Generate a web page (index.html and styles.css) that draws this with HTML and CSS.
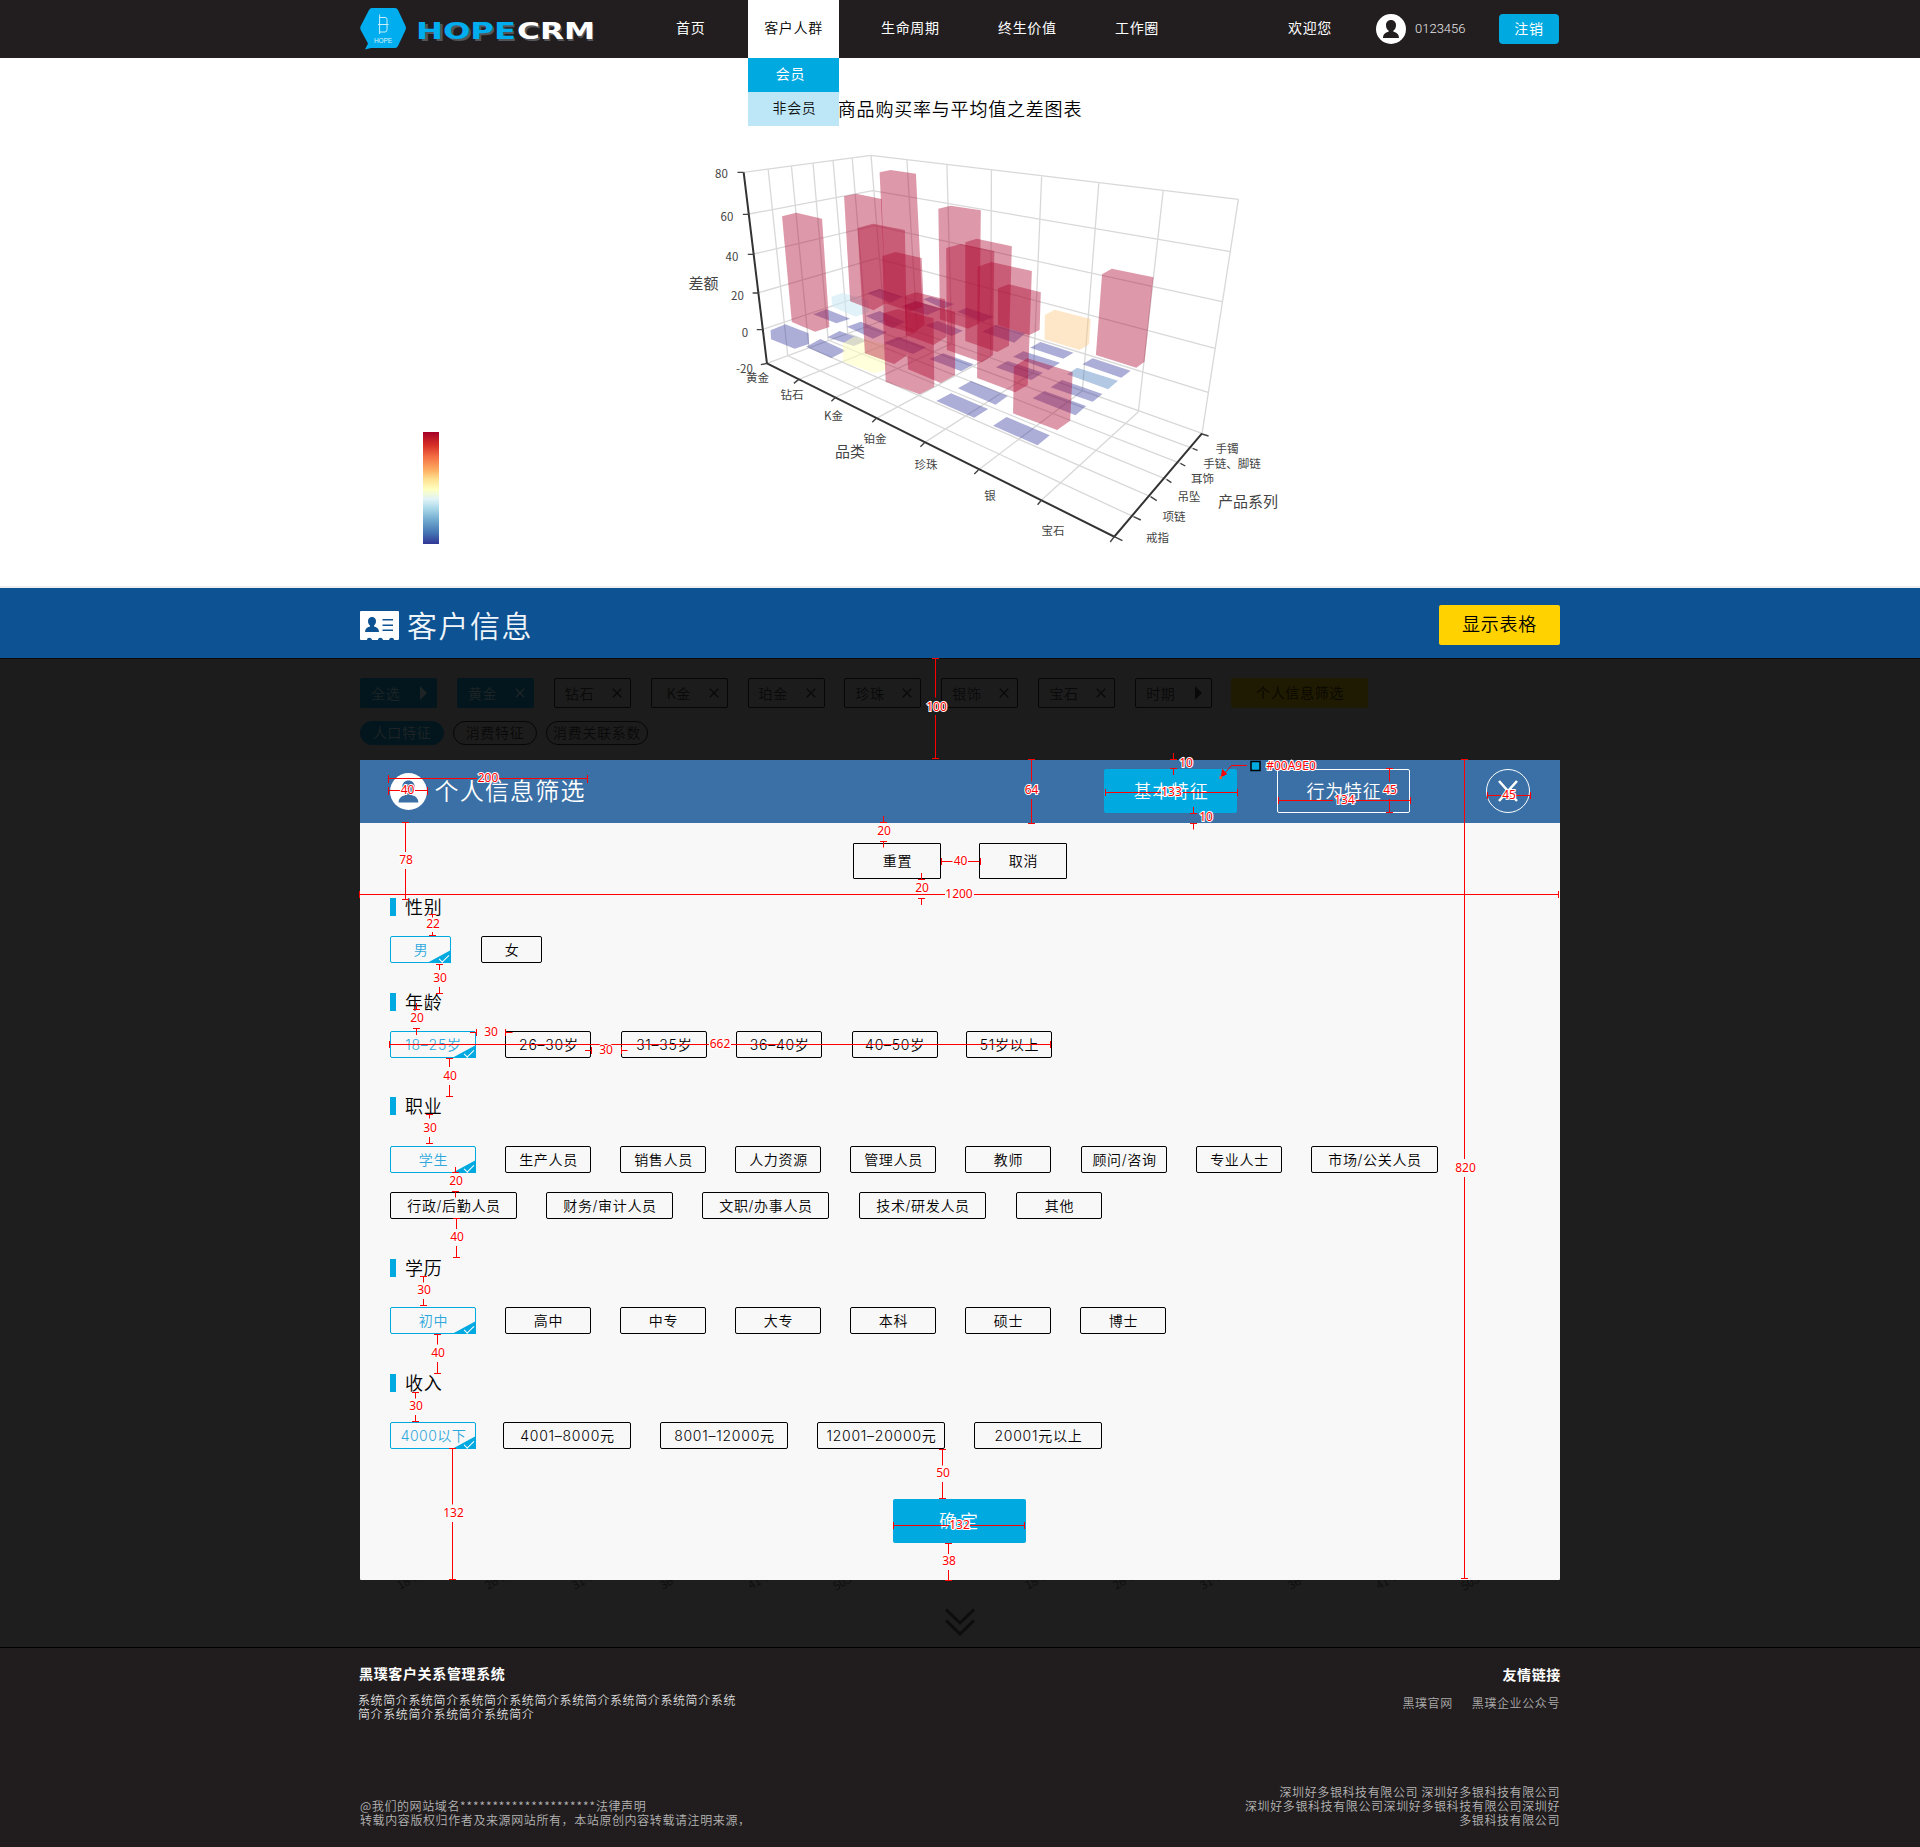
FILE: index.html
```html
<!DOCTYPE html>
<html lang="zh-CN">
<head>
<meta charset="utf-8">
<title>HOPECRM</title>
<link rel="stylesheet" href="styles.css">
</head>
<body>
<svg class="defs" width="0" height="0">
  <symbol id="user" viewBox="0 0 30 30"><circle cx="15" cy="15" r="15" fill="#fff"/><path class="cut" d="M15 6c-3 0-5 2.200-5 5.200 0 2.400 1 4.400 2.600 5.400v1.200C9.500 18.600 7 20.200 7 24h16c0-3.800-2.500-5.400-5.600-6.200v-1.200C19 15.600 20 13.600 20 11.200 20 8.200 18 6 15 6z"/></symbol>
  <symbol id="x" viewBox="0 0 10 10"><path d="M.8.8l8.400 8.400M9.200.8L.8 9.200" fill="none" stroke="currentColor" stroke-width="1.300"/></symbol>
  <symbol id="play" viewBox="0 0 8 14"><path d="M0 0l7 7-7 7z" fill="currentColor"/></symbol>
</svg>
<header class="top">
  <div class="wrap top-row">
    <svg class="logo" width="240" height="58" viewBox="0 0 240 58">
      <path d="M12 8h23q2 0 3 2l7.500 16q.8 2 0 4L38 46q-1 2-3 2H11l-6 1.500 3-6L.700 30q-.8-2 0-4L9 10q1-2 3-2z" fill="#00aeef"/>
      <path d="M19.600 14.500v19.500M20 17.500h5q2 0 2 2v10q0 2.500-2 2.500h-5M18 24.500h10.500" fill="none" stroke="#c9eefc" stroke-width="1"/>
      <text class="logo-tag" x="14" y="43" textLength="18">HOPE</text>
      <g class="logo-word logo-shadow" aria-hidden="true"><text x="59" y="41" textLength="98" lengthAdjust="spacingAndGlyphs">HOPE</text><text x="159" y="41" textLength="77" lengthAdjust="spacingAndGlyphs">CRM</text></g>
      <g class="logo-word"><text x="56" y="39" textLength="100" lengthAdjust="spacingAndGlyphs" fill="#00aeef">HOPE</text><text x="157" y="39" textLength="78" lengthAdjust="spacingAndGlyphs" fill="#fff">CRM</text></g>
    </svg>
    <nav class="nav">
      <a class="n-home">首页</a>
      <div class="tab">客户人群
        <div class="menu"><a class="on">会员</a><a>非会员</a></div>
      </div>
      <a class="n-life">生命周期</a>
      <a class="n-value">终生价值</a>
      <a class="n-work">工作圈</a>
    </nav>
    <div class="account">
      <span>欢迎您</span>
      <svg class="avatar" width="30" height="30"><use href="#user"/></svg>
      <span class="uid">0123456</span>
      <a class="logout">注销</a>
    </div>
  </div>
</header>

<section class="chart">
  <h1>商品购买率与平均值之差图表</h1>
  <div class="wrap chart-row">
    <div class="legend"></div>
    <svg class="plot" width="640" height="420" viewBox="0 0 640 420">
      <g transform="scale(.408163 .333333)">
        <g class="grid">
          <path d="M205 97L517 46L1417 178M218 222L521 152L1398 335M230 342L525 257L1377 485M242 458L530 355L1360 625M252 568L538 450L1343 757M262 670L550 540L1328 880"/>
          <path d="M265 88L313 647M322 78L365 623M375 70L412 600M424 62L460 580M471 55L505 560M517 46L550 540M605 60L630 575M703 75L715 610M812 90L810 650M935 110L915 697M1075 130L1035 752M1233 150L1172 815M1417 178L1328 880"/>
          <path d="M340 718L630 575M430 772L715 610M530 835L810 650M648 908L915 697M780 990L1035 752M935 1080L1172 815M313 647L1160 1130M365 623L1202 1070M412 600L1241 1018M460 580L1275 970M505 560L1305 925"/>
        </g>
        <g class="flat">
          <path d="M271 571L307 553L364 580L365 612L330 626L272 598z"/>
          <path d="M358 620L393 597L455 632L420 654z"/>
          <path d="M375 523L408 508L466 536L432 550z"/>
          <path d="M410 592L440 573L505 603L475 618z"/>
          <path d="M458 560L492 545L556 577L522 596z"/>
          <path d="M504 528L538 513L600 545L570 565z"/>
          <path d="M508 460L538 446L594 470L566 488z"/>
          <path d="M592 500L625 482L688 508L655 525z"/>
          <path d="M645 478L663 470L720 492L695 506z"/>
          <path d="M548 608L585 590L652 622L620 642z"/>
          <path d="M650 556L680 543L742 572L715 588z"/>
          <path d="M728 515L752 503L818 530L790 545z"/>
          <path d="M660 657L694 640L769 673L738 694z"/>
          <path d="M789 575L823 555L895 580L868 608z"/>
          <path d="M730 745L762 723L852 768L822 794z"/>
          <path d="M677 783L713 760L804 807L770 833z"/>
          <path d="M816 857L849 831L955 886L925 916z"/>
          <path d="M907 623L932 606L1013 638L988 656z"/>
          <path d="M865 650L890 634L980 668L952 690z"/>
          <path d="M823 682L852 663L938 698L910 720z"/>
          <path d="M1035 673L1060 655L1153 692L1130 713z"/>
          <path class="blue" d="M997 703L1022 683L1122 722L1098 748z"/>
          <path d="M957 742L985 720L1084 762L1060 785z"/>
          <path d="M913 775L942 753L1044 798L1018 826z"/>
        </g>
        <path d="M420 470L447 459L510 480L512 515L480 530L422 500z" fill="#cdebf5" fill-opacity=".6"/>
        <path d="M448 610L475 590L550 612L553 690L525 700L448 665z" fill="#ffffbf" fill-opacity=".55"/>
        <path d="M943 525L967 509L1055 537L1051 613L1028 630L942 598z" fill="#fdc57d" fill-opacity=".42"/>
        <g class="bar">
          <path d="M299 229L334 218L397 236L415 561L380 575L323 546z"/>
          <path d="M451 169L480 161L543 177L553 490L523 511L466 484z"/>
          <path d="M538 97L565 90L627 101L643 500L612 515L553 490z"/>
          <path d="M484 264L522 251L600 270L606 645L574 672L502 640z"/>
          <path d="M545 348L577 336L641 354L648 555L620 580L550 555z"/>
          <path d="M600 468L628 457L698 478L702 590L670 615L602 585z"/>
          <path d="M546 520L583 507L670 535L672 740L636 763L553 725z"/>
          <path d="M600 495L628 485L723 515L723 705L688 729L608 688z"/>
          <path d="M682 206L712 197L786 211L783 550L755 566L686 538z"/>
          <path d="M701 324L737 312L819 333L816 645L788 667L703 630z"/>
          <path d="M748 307L776 296L862 319L855 617L826 636L748 603z"/>
          <path d="M778 380L812 366L911 393L901 735L870 757L777 714z"/>
          <path d="M828 445L855 433L933 457L930 570L905 585L828 555z"/>
          <path d="M1083 403L1107 386L1209 412L1187 665L1167 683L1068 645z"/>
          <path d="M867 680L900 655L1011 697L1005 842L973 870L865 820z"/>
        </g>
        <path class="axis" d="M205 97L262 670L1113 1190L1328 880"/>
        <path class="tick" d="M190 97h15M203 223h15M215 343h15M227 459h15M237 569h15M247 674l15-4M340 718l-12 12M430 772l-10 12M530 835l-10 12M648 908l-10 12M780 990l-10 12M935 1080l-10 14M1113 1190l-10 16M1113 1190l20 12M1160 1130l18 10M1202 1070l15 12M1241 1018l12 10M1275 970l12 8M1305 925l12 6M1328 882l16 6"/>
      </g>
      <g class="labels">
        <text x="61.500" y="38">80</text><text x="67" y="81">60</text><text x="72" y="121">40</text><text x="77.500" y="160">20</text><text x="85" y="197">0</text><text x="84.500" y="233">-20</text>
        <text x="97.500" y="242">黄金</text><text x="132" y="259">钻石</text><text x="173.500" y="280">K金</text><text x="215" y="303">铂金</text><text x="266" y="329">珍珠</text><text x="330" y="360">银</text><text x="393" y="395">宝石</text>
        <text x="567" y="313">手镯</text><text x="572" y="328">手链、脚链</text><text x="542.500" y="343">耳饰</text><text x="529" y="361">吊坠</text><text x="514" y="381">项链</text><text x="497.500" y="402">戒指</text>
        <g class="big"><text x="43.500" y="149">差额</text><text x="190" y="317">品类</text><text x="588" y="367">产品系列</text></g>
      </g>
    </svg>
  </div>
</section>

<section class="info">
  <div class="wrap info-row">
    <svg width="39" height="29" viewBox="0 0 39 29"><path d="M1 0h37q1 0 1 1v27q0 1-1 1h-4c0-3-4.500-3-5 0h-6c-.5-3-5-3-5 0h-6c-.5-3-5-3-5 0H1q-1 0-1-1V1q0-1 1-1z" fill="#fff"/><path d="M12 6c-2.500 0-4 1.800-4 4 0 2 .8 3.600 2 4.400v1C7 16.200 5 17.600 5 21h14c0-3.400-2-4.800-5-5.600v-1c1.200-.8 2-2.400 2-4.400 0-2.200-1.500-4-4-4zM22.500 8H33v1.500H22.500zM22.500 13.500H33V15H22.500zM22.500 18.500H33V20H22.500z" fill="#0d5292"/></svg>
    <h2>客户信息</h2>
    <a class="show-table">显示表格</a>
  </div>
</section>

<main class="stage">
  <div class="wrap">
    <div class="filters">
      <a class="f fill">全选<svg width="8" height="14"><use href="#play"/></svg></a>
      <a class="f fill">黄金<svg width="10" height="10"><use href="#x"/></svg></a>
      <a class="f">钻石<svg width="10" height="10"><use href="#x"/></svg></a>
      <a class="f k">K金<svg width="10" height="10"><use href="#x"/></svg></a>
      <a class="f">珀金<svg width="10" height="10"><use href="#x"/></svg></a>
      <a class="f">珍珠<svg width="10" height="10"><use href="#x"/></svg></a>
      <a class="f">银饰<svg width="10" height="10"><use href="#x"/></svg></a>
      <a class="f">宝石<svg width="10" height="10"><use href="#x"/></svg></a>
      <a class="f">时期<svg width="8" height="14"><use href="#play"/></svg></a>
      <a class="f-person">个人信息筛选</a>
    </div>
    <div class="pills"><a class="fill">人口特征</a><a>消费特征</a><a class="wide">消费关联系数</a></div>

    <div class="dialog">
      <div class="dialog-head">
        <svg class="avatar blue" width="37" height="37"><use href="#user"/></svg>
        <h3>个人信息筛选</h3>
        <a class="feature on">基本特征</a>
        <a class="feature">行为特征</a>
        <a class="close"><svg width="20" height="22" viewBox="0 0 20 22"><path d="M1 1l18 20M19 1L1 21" fill="none" stroke="#fff" stroke-width="2.600"/></svg></a>
      </div>
      <div class="dialog-body">
        <div class="actions"><a>重置</a><a>取消</a></div>

        <h4>性别</h4>
        <div class="opts sex"><a class="sel">男</a><a>女</a></div>
        <h4>年龄</h4>
        <div class="opts age"><a class="sel">18–25岁</a><a>26–30岁</a><a>31–35岁</a><a>36–40岁</a><a>40–50岁</a><a>51岁以上</a></div>
        <h4>职业</h4>
        <div class="opts job"><a class="sel">学生</a><a>生产人员</a><a>销售人员</a><a>人力资源</a><a>管理人员</a><a>教师</a><a class="nudge">顾问/咨询</a><a>专业人士</a><a class="long">市场/公关人员</a></div>
        <div class="opts job2"><a class="long">行政/后勤人员</a><a class="long">财务/审计人员</a><a class="long">文职/办事人员</a><a class="long nudge">技术/研发人员</a><a class="nudge">其他</a></div>
        <h4>学历</h4>
        <div class="opts edu"><a class="sel">初中</a><a>高中</a><a>中专</a><a>大专</a><a>本科</a><a>硕士</a><a>博士</a></div>
        <h4>收入</h4>
        <div class="opts pay"><a class="sel">4000以下</a><a class="long first">4001–8000元</a><a class="long">8001–12000元</a><a class="long">12001–20000元</a><a class="long">20001元以上</a></div>
        <a class="confirm">确定</a>
      </div>
    </div>

    <svg class="ghost" width="1200" height="14" viewBox="0 0 1200 14">
      <text transform="translate(40 10) rotate(-30)">18-25岁</text><text transform="translate(128 10) rotate(-30)">26-30岁</text><text transform="translate(215 10) rotate(-30)">31-35岁</text><text transform="translate(303 10) rotate(-30)">36-40岁</text><text transform="translate(391 10) rotate(-30)">41-50岁</text><text transform="translate(476 11) rotate(-30)">503-25</text>
      <text transform="translate(668 10) rotate(-30)">18-25岁</text><text transform="translate(756 10) rotate(-30)">26-30岁</text><text transform="translate(843 10) rotate(-30)">31-35岁</text><text transform="translate(931 10) rotate(-30)">36-40岁</text><text transform="translate(1019 10) rotate(-30)">41-50岁</text><text transform="translate(1104 11) rotate(-30)">503-25</text>
    </svg>
    <svg class="more" width="30" height="28" viewBox="0 0 30 28"><path d="M1 1.500l14 13.500 14-13.500M1 12.500L15 26l14-13.500" fill="none" stroke="#0d0d0d" stroke-width="3"/></svg>
  </div>
</main>

<footer class="foot">
  <div class="wrap foot-grid">
    <div>
      <h5>黑璞客户关系管理系统</h5>
      <p class="intro">系统简介系统简介系统简介系统简介系统简介系统简介系统简介系统<br>简介系统简介系统简介系统简介</p>
    </div>
    <div class="right">
      <h5 class="links-title">友情链接</h5>
      <p class="links"><a>黑璞官网</a><a>黑璞企业公众号</a></p>
    </div>
    <p class="legal">@我们的网站域名<span class="stars">*********************</span>法律声明<br>转载内容版权归作者及来源网站所有，本站原创内容转载请注明来源，</p>
    <p class="legal right">深圳好多银科技有限公司 深圳好多银科技有限公司<br>深圳好多银科技有限公司深圳好多银科技有限公司深圳好<br>多银科技有限公司</p>
  </div>
</footer>

<svg class="specs" width="1920" height="1847" viewBox="0 0 1920 1847">
  <path d="M935.500 658.500v39M935.500 715v43.500M932 658.500h7M932 758.500h7
    M388.500 778.500H477M499 778.500h88.500M388.500 775v8M587.500 775v8
    M388.500 790.500H401M415 790.500h12.500M388.500 787v8M427.500 787v8
    M1031.500 759.500v22M1031.500 799v24.500M1028 759.500h7M1028 823.500h7
    M1173.500 753v6.500M1170 759.500h7M1170 768.500h7M1173.500 768.500v6.500
    M1105.500 792.500H1161M1183 792.500h54.500M1105.500 789v7M1237.500 789v7
    M1193.500 807v6.500M1190 813.500h7M1190 823.500h7M1193.500 823.500v6
    M1247 765.500h-15.500L1224 774
    M1278.500 800.500H1333M1355 800.500h55.500M1278.500 797v7M1410.500 797v7
    M1389.500 768.500v13M1389.500 799v13.500M1386 768.500h7M1386 812.500h7
    M1487.500 795.500h14M1516 795.500h14.500M1487.500 792v7M1530.500 792v7
    M1464.500 759.500V1159M1464.500 1177v401.500M1461 759.500h7M1461 1578.500h7
    M405.500 822.500V852M405.500 869v30.500M402 822.500h7M402 899.500h7
    M883.500 816v6.500M880 822.500h7M880 841.500h7M883.500 841.500v6
    M941.500 861.500h11M968 861.500h11.500M941.500 858v7M980.500 858v7
    M921.500 873v6.500M918 879.500h7M918 898.500h7M921.500 898.500v6.500
    M359.500 894.500H945M974 894.500h585M359.500 891v7M1558.500 891v7
    M432.500 914.500v3M432.500 932v3.500M429 914.500h7M429 935.500h7
    M439.500 964.500v5.500M439.500 987v6.500M436 964.500h7M436 993.500h7
    M416.500 1003v6.500M413 1009.500h7M413 1028.500h7M416.500 1028.500v6.500
    M470 1032.500h6.500M476.500 1029v7M505.500 1029v7M505.500 1032.500h7
    M585 1050.500h6.500M591.500 1047v7M621.500 1047v7M621.500 1050.500h6
    M389.500 1044.500H709M731 1044.500h320M389.500 1041v7M1050.500 1041v7
    M449.500 1058v9M449.500 1085v11.500M446 1058.500h7M446 1096.500h7
    M429.500 1114.500v4M429.500 1137v6.500M426 1114.500h7M426 1143.500h7
    M455.500 1167v5.500M452 1172.500h7M452 1191.500h7M455.500 1191.500v6
    M456.500 1219v10M456.500 1246v11.500M453 1218.500h7M453 1257.500h7
    M423.500 1276.500v6M423.500 1299v6.500M420 1276.500h7M420 1305.500h7
    M437.500 1334.500v10M437.500 1362v11.500M434 1334.500h7M434 1373.500h7
    M415.500 1392.500v6M415.500 1415v6.500M412 1392.500h7M412 1421.500h7
    M452.500 1448.500v56M452.500 1522v57.500M449 1448.500h7M449 1579.500h7
    M942.500 1449.500v16M942.500 1482v16.500M939 1449.500h7M939 1498.500h7
    M893.500 1525.500H949M970 1525.500h54.500M893.500 1522v7M1024.500 1522v7
    M948.500 1543.500v10.500M948.500 1570v10.500M945 1543.500h7M945 1580.500h7"/>
  <path class="head" d="M1221.500 776.500l1-7 4 4.500z"/>
  <rect x="1219.500" y="776" width="2.500" height="3" fill="#f15a24"/>
  <rect x="1251" y="761.500" width="9" height="9" fill="#00a9e0" stroke="#000" stroke-width="1.500"/>
  <g>
    <text x="936.500" y="711">100</text><text x="488" y="782">200</text><text x="407.500" y="794">40</text><text x="1031.500" y="794">64</text><text x="1186" y="767">10</text><text x="1171.500" y="796">133</text><text x="1206" y="821">10</text><text x="1291" y="770">#00A9E0</text><text x="1344.500" y="804">134</text><text x="1390" y="794">45</text><text x="1509" y="799">45</text><text x="1465.500" y="1172">820</text>
    <text x="406" y="864">78</text><text x="884" y="835">20</text><text x="960.500" y="865">40</text><text x="922" y="892">20</text><text x="959" y="898">1200</text><text x="433" y="928">22</text><text x="440" y="982">30</text><text x="417" y="1022">20</text><text x="491" y="1036">30</text><text x="606" y="1054">30</text><text x="720" y="1048">662</text><text x="450" y="1080">40</text><text x="430" y="1132">30</text><text x="456" y="1185">20</text><text x="457" y="1241">40</text><text x="424" y="1294">30</text><text x="438" y="1357">40</text><text x="416" y="1410">30</text><text x="453.500" y="1517">132</text><text x="943" y="1477">50</text><text x="959.500" y="1529">132</text><text x="949" y="1565">38</text>
  </g>
</svg>
</body>
</html>
```

FILE: styles.css
```css
* { box-sizing: border-box; }
body {
  margin: 0;
  position: relative;
  background: #fff;
  color: #000;
  font: 350 14px/20px "Noto Sans CJK SC", sans-serif;
  letter-spacing: .65px;
}
h1, h2, h3, h4, h5, p { margin: 0; font-weight: 350; }
svg { display: block; flex: none; }
.defs { position: absolute; }
.wrap { width: 1200px; margin: 0 auto; }

.top { height: 58px; background: #221e1f; color: #fff; font-weight: 400; }
.top-row { display: flex; height: 58px; }
.logo-tag { font: 6.5px "Liberation Sans", sans-serif; fill: #d6f3fd; letter-spacing: 0; }
.logo-word { font: bold 23.5px "DejaVu Sans", sans-serif; letter-spacing: 0; }
.logo-shadow { fill: #55565a; }
.nav { display: flex; line-height: 55px; }
.n-home { width: 72px; margin-left: 76px; }
.tab { position: relative; width: 91px; background: #fff; color: #000; text-align: center; font-weight: 350; }
.menu { position: absolute; left: 0; top: 58px; width: 91px; z-index: 2; }
.menu a { display: block; height: 34px; line-height: 31px; background: #bde7f6; color: #111; padding-left: 2px; }
.menu .on { background: #00a9e0; color: #fff; padding: 0 6px 0 0; font-weight: 400; }
.n-life { margin-left: 42px; width: 117px; }
.n-value { width: 117px; }
.n-work { width: 60px; }
.account { display: flex; align-items: center; margin-left: auto; line-height: 55px; }
.account > span:first-child { margin-top: -3px; }
.avatar { margin-left: 44px; fill: #221e1f; }
.uid { margin-left: 9px; font: 300 13px/58px Roboto, sans-serif; letter-spacing: 0; width: 84px; color: #e8e8e8; }
.logout { width: 60px; height: 30px; line-height: 28px; border-radius: 4px; background: #00a9e0; text-align: center; margin-right: 1px; }

.chart { height: 530px; border-bottom: 2px solid #eee; }
.chart h1 { padding-top: 38px; height: 82px; font-size: 18px; line-height: 24px; letter-spacing: .8px; text-align: center; }
.chart-row { display: flex; padding-left: 63px; }
.legend { width: 16px; height: 112px; margin: 292px 221px 0 0; background: linear-gradient(#a50026, #d73027 12%, #f46d43 22%, #fdae61 34%, #fee090 42%, #ffffbf 51%, #e0f3f8 60%, #abd9e9 68%, #74add1 78%, #4575b4 90%, #313695); }
.grid path, .axis, .tick { fill: none; vector-effect: non-scaling-stroke; }
.grid path { stroke: #d8d8d8; stroke-width: 1.3; }
.axis { stroke: #333; stroke-width: 2; }
.tick { stroke: #444; stroke-width: 1.4; }
.flat { fill: #3b3da0; fill-opacity: .42; }
.flat .blue { fill: #4a7cba; }
.bar { fill: #ae0932; fill-opacity: .42; }
.labels { font-size: 11.5px; font-weight: 400; letter-spacing: 0; text-anchor: middle; fill: #444; }
.labels .big { font-size: 15px; }

.info { height: 70px; background: #0d5292; color: #f0f5fa; }
.info-row { display: flex; align-items: center; height: 70px; padding-top: 5px; }
.info h2 { font-size: 30px; line-height: 40px; letter-spacing: 1.5px; margin: -4px 0 0 8px; }
.show-table { margin: -1px 0 0 auto; width: 121px; height: 40px; line-height: 37px; background: #ffd200; color: #000; border-radius: 2px; text-align: center; font-size: 18px; letter-spacing: .8px; }

.stage { height: 989px; border-top: 1px solid #0a0a0a; background: linear-gradient(#1c1c1c 101px, #1e1e1e 101px); padding-top: 19px; }
.filters { display: flex; gap: 19.9px; color: #090909; }
.f { display: flex; align-items: center; width: 77px; height: 30px; line-height: 26px; padding: 0 8px 0 10px; border: 1px solid #060606; border-radius: 2px; }
.f svg { margin-left: auto; }
.f.k { padding-left: 15px; }
.f.fill, .pills .fill { background: #03161d; border-color: #03161d; color: #1e2425; }
.f-person { width: 137px; height: 30px; line-height: 28px; margin-left: -1px; border-radius: 2px; background: #1f1a02; color: #080700; text-align: center; text-indent: 1px; }
.pills { display: flex; gap: 9px; margin-top: 13px; color: #090909; }
.pills a { width: 84px; height: 24px; line-height: 20px; border: 1px solid #060606; border-radius: 12px; text-align: center; }
.pills .wide { width: 102px; }

.dialog { margin-top: 15px; height: 820px; background: #f8f8f8; border-radius: 1px; }
.dialog-head { display: flex; align-items: center; height: 63px; padding: 0 30px 1px 0; background: #3a70a5; color: #fff; }
.dialog-head .avatar { margin-left: 29.5px; fill: #3a70a5; }
.dialog h3 { font-size: 24px; line-height: 30px; letter-spacing: 1.2px; margin: -3px auto 0 8px; }
.feature { width: 133px; height: 44px; line-height: 40px; margin-right: 40px; border: 1px solid #fff; border-radius: 2px; text-align: center; text-indent: 1px; font-size: 18px; letter-spacing: .8px; }
.feature.on { background: #00a9e0; border-color: #00a9e0; }
.feature + .feature { margin-right: 76px; }
.close { display: grid; place-items: center; width: 44px; height: 44px; border: 1px solid #fff; border-radius: 50%; }
.dialog-body { padding: 20px 30px 0; }
.actions { display: flex; justify-content: center; gap: 38px; margin-bottom: 19px; }
.actions a { width: 88px; height: 36px; line-height: 33px; border: 1px solid #000; border-radius: 1px; text-align: center; text-indent: 1px; }
h4 { height: 18px; border-left: 6px solid #00a9e0; padding-left: 9px; font-size: 18px; line-height: 17px; letter-spacing: .8px; }
.opts { display: flex; gap: 29px; font-family: Inter, "Noto Sans CJK SC", sans-serif; }
.opts a { position: relative; width: 86px; height: 27px; line-height: 25px; border: 1px solid #000; border-radius: 2px; text-align: center; text-indent: 1px; white-space: nowrap; }
.opts .long { width: 127px; }
.opts .nudge { margin-left: 1px; }
.opts .sel { border-color: #00a9e0; color: #2ea8dc; }
.sel::before { content: ""; position: absolute; right: -1px; bottom: -1px; width: 24px; height: 13px; background: #00a9e0; clip-path: polygon(100% 0, 100% 100%, 0 100%); }
.sel::after { content: ""; position: absolute; right: 1px; bottom: 2px; width: 9px; height: 4px; border: solid #fff; border-width: 0 0 1.2px 1.2px; transform: rotate(-45deg); }
.sex { margin: 20px 0 30px; gap: 30px; }
.sex a { width: 61px; }
.age { margin: 20px 0 39px; gap: 29.4px; letter-spacing: .75px; }
.age a:last-child { margin-left: -1px; }
.job { margin: 31px 0 19px; }
.job2 { margin-bottom: 40px; }
.edu { margin: 30px 0 40px; }
.pay { margin: 30px 0 50px; letter-spacing: .75px; }
.pay .sel { letter-spacing: .5px; }
.pay .long { width: 128px; }
.pay .first { margin-left: -2px; }
.confirm { display: block; width: 133px; height: 44px; line-height: 43px; margin-left: 503px; border-radius: 2px; background: #00a9e0; color: #fff; text-align: center; text-indent: 1px; font-size: 18px; letter-spacing: 3px; }
.ghost { font-size: 11.5px; font-weight: 400; letter-spacing: 0; fill: #0e0e0e; }
.more { margin: 14px auto 0; }

.foot { height: 200px; border-top: 1px solid #000; background: #211d1e; color: #ddd; font-size: 12px; line-height: 14px; letter-spacing: .6px; }
.foot-grid { display: grid; grid-template-columns: 600px 600px; grid-template-rows: 122px auto; padding-top: 15px; }
h5 { color: #fff; font-size: 14px; font-weight: 700; line-height: 20px; letter-spacing: .65px; margin-left: -1px; }
.intro { margin: 10px 0 0 -2px; }
.right { text-align: right; }
.links-title { margin-top: 1px; margin-right: -1px; }
.links { display: flex; justify-content: flex-end; gap: 19px; margin-top: 12px; color: #aaa; }
.legal { color: #b4b4b4; align-self: end; }
.stars { letter-spacing: .95px; }

.specs { position: absolute; left: 0; top: 0; z-index: 5; pointer-events: none; font: 400 12px "Noto Sans", sans-serif; letter-spacing: 0; text-anchor: middle; }
.specs path { fill: none; stroke: #f00; stroke-width: 1; }
.specs .head { fill: #f00; }
.specs text { fill: #f00; stroke: #fff; stroke-width: 2px; paint-order: stroke; }
```
